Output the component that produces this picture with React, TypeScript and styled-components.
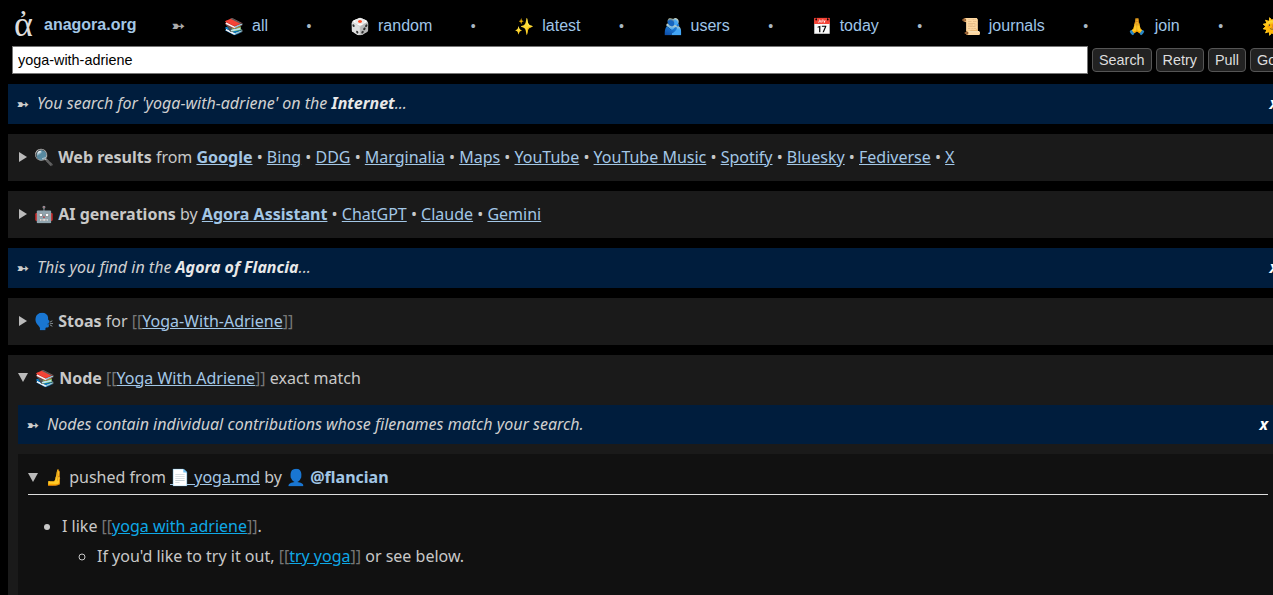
import styled, { createGlobalStyle } from "styled-components"

const GlobalStyle = createGlobalStyle`
  html, body {
    margin: 0;
    height: 595px;
    overflow: hidden;
    background: #000;
  }
  body {
    font-family: "Noto Sans", sans-serif;
    font-size: 16px;
    color: #c8c8c8;
  }
`

const Page = styled.div`
  width: 1283px;
  padding: 0 0 0 8px;
  box-sizing: border-box;
`

const Header = styled.header`
  height: 84px;
  font-family: "Liberation Sans", Arial, sans-serif;
`

const NavRow = styled.nav`
  display: flex;
  align-items: center;
  height: 46px;
  padding: 6px 0 0 6px;
  box-sizing: border-box;
  white-space: nowrap;
  color: #a9c4dc;
`

const Alpha = styled.span`
  font-family: "Liberation Serif", serif;
  font-size: 36px;
  line-height: 36px;
  width: 30px;
  margin-top: -4px;
  color: #ddd;
`

const Brand = styled.a`
  font-weight: 700;
  color: #a3c7e6;
  width: 92px;
  margin-top: -3px;
`

const NavArrow = styled.span`
  margin-left: 36px;
  width: 52px;
  font-size: 15px;
  font-weight: 700;
  color: #aaa;
`

const NavLink = styled.a`
  color: #9fc5e8;
  font-size: 16px;
  display: inline-flex;
  gap: 8px;
`

const Dot = styled.span`
  width: 82px;
  flex: none;
  text-align: center;
  color: #a9b8c4;
  font-size: 14px;
`

const NavEntry = styled.span`
  display: contents;
`

const SearchRow = styled.form`
  display: flex;
  align-items: center;
  gap: 4px;
  margin: 0;
  padding-left: 4px;
  height: 28px;
`

const SearchInput = styled.input`
  width: 1076px;
  height: 28px;
  box-sizing: border-box;
  flex: none;
  padding: 0 5px;
  border: 1px solid #767676;
  background: #fff;
  color: #000;
  font-family: "Liberation Sans", Arial, sans-serif;
  font-size: 14.4px;
`

const Button = styled.button`
  flex: none;
  height: 24px;
  padding: 0 6px;
  border: 1px solid #555;
  border-radius: 4px;
  background: #222;
  color: #ddd;
  font-family: "Liberation Sans", Arial, sans-serif;
  font-size: 14.4px;
`

const Stack = styled.main`
  display: flex;
  flex-direction: column;
  gap: 10px;
`

const Notice = styled.div<{ $compact?: boolean }>`
  display: flex;
  align-items: center;
  justify-content: space-between;
  height: ${(p) => (p.$compact ? 39 : 40)}px;
  box-sizing: border-box;
  padding: 0 5px 2px 9px;
  background: #001d3d;
  color: #d0d0d0;
  font-style: italic;
  b {
    color: #e8e8e8;
  }
`

const NoticeText = styled.span`
  display: inline-flex;
  gap: 8px;
  align-items: baseline;
`

const NoticeArrow = styled.span`
  font-style: normal;
  font-size: 14px;
  font-weight: 700;
  color: #ccc;
`

const Close = styled.span`
  font-weight: 700;
  color: #fff;
`

const Card = styled.section`
  background: #1a1a1a;
  padding: 0 10px;
  min-height: 47px;
`

const Summary = styled.div`
  display: flex;
  align-items: center;
  height: 47px;
  box-sizing: border-box;
  padding-bottom: 2px;
  white-space: nowrap;
`

const SummaryText = styled.span``

const Triangle = styled.span<{ $open?: boolean }>`
  flex: none;
  width: 0;
  height: 0;
  margin-right: 7px;
  ${(p) =>
    p.$open
      ? `border-left: 5px solid transparent; border-right: 5px solid transparent; border-top: 9px solid #bbb;`
      : `margin-left: 1px; border-top: 5px solid transparent; border-bottom: 5px solid transparent; border-left: 8px solid #bbb;`}
`

const Link = styled.a`
  color: #a3c7e6;
  text-decoration: underline;
`

const Muted = styled.span`
  color: #777;
`

const NodeBody = styled.div`
  display: flex;
  flex-direction: column;
  gap: 10px;
  padding-top: 3px;
`

const Subnode = styled.article`
  background: #111;
  height: 160px;
  padding: 0 10px;
`

const SubSummary = styled(Summary)`
  padding: 6px 0 0;
  border-bottom: 1px solid #ddd;
  width: 1240px;
  box-sizing: content-box;
  height: 34px;
`

const Handle = styled.span`
  color: #a3c7e6;
  font-weight: 700;
`

const Bullets = styled.ul`
  margin: 16px 0 0;
  padding-left: 34px;
  line-height: 30px;
  ul {
    margin: 0;
    padding-left: 35px;
  }
  a {
    color: #0fa8e6;
    text-decoration: underline;
  }
`

const navItems = [
  ["📚", "all"],
  ["🎲", "random"],
  ["✨", "latest"],
  ["🫂", "users"],
  ["📅", "today"],
  ["📜", "journals"],
  ["🙏", "join"],
]

const webLinks = ["Bing", "DDG", "Marginalia", "Maps", "YouTube", "YouTube Music", "Spotify", "Bluesky", "Fediverse", "X"]

export default function App() {
  return (
    <Page>
      <GlobalStyle />
      <Header>
        <NavRow>
          <Alpha>ἀ</Alpha>
          <Brand>anagora.org</Brand>
          <NavArrow>➳</NavArrow>
          {navItems.map(([icon, label]) => (
            <NavEntry key={label}>
              <NavLink>
                <span>{icon}</span>
                {label}
              </NavLink>
              <Dot>•</Dot>
            </NavEntry>
          ))}
          <NavLink>🌞</NavLink>
        </NavRow>
        <SearchRow>
          <SearchInput defaultValue="yoga-with-adriene" />
          <Button type="button">Search</Button>
          <Button type="button">Retry</Button>
          <Button type="button">Pull</Button>
          <Button type="button">Go</Button>
        </SearchRow>
      </Header>
      <Stack>
        <Notice>
          <NoticeText>
            <NoticeArrow>➳</NoticeArrow>
            <span>
              You search for 'yoga-with-adriene' on the <b>Internet</b>...
            </span>
          </NoticeText>
          <Close>x</Close>
        </Notice>
        <Card>
          <Summary>
            <Triangle />
            <SummaryText>
              🔍 <b>Web results</b> from{" "}
              <Link>
                <b>Google</b>
              </Link>
              {webLinks.map((l) => (
                <span key={l}>
                  {" • "}
                  <Link>{l}</Link>
                </span>
              ))}
            </SummaryText>
          </Summary>
        </Card>
        <Card>
          <Summary>
            <Triangle />
            <SummaryText>
              🤖 <b>AI generations</b> by{" "}
              <Link>
                <b>Agora Assistant</b>
              </Link>
              {" • "}
              <Link>ChatGPT</Link>
              {" • "}
              <Link>Claude</Link>
              {" • "}
              <Link>Gemini</Link>
            </SummaryText>
          </Summary>
        </Card>
        <Notice>
          <NoticeText>
            <NoticeArrow>➳</NoticeArrow>
            <span>
              This you find in the <b>Agora of Flancia</b>...
            </span>
          </NoticeText>
          <Close>x</Close>
        </Notice>
        <Card>
          <Summary>
            <Triangle />
            <SummaryText>
              🗣️ <b>Stoas</b> for <Muted>[[</Muted>
              <Link>Yoga-With-Adriene</Link>
              <Muted>]]</Muted>
            </SummaryText>
          </Summary>
        </Card>
        <Card>
          <Summary>
            <Triangle $open />
            <SummaryText>
              📚 <b>Node</b> <Muted>[[</Muted>
              <Link>Yoga With Adriene</Link>
              <Muted>]]</Muted> exact match
            </SummaryText>
          </Summary>
          <NodeBody>
            <Notice $compact>
              <NoticeText>
                <NoticeArrow>➳</NoticeArrow>
                <span>Nodes contain individual contributions whose filenames match your search.</span>
              </NoticeText>
              <Close>x</Close>
            </Notice>
            <Subnode>
              <SubSummary>
                <Triangle $open />
                <SummaryText>
                  🫸 pushed from <Link>📄 yoga.md</Link> by 👤 <Handle>@flancian</Handle>
                </SummaryText>
              </SubSummary>
              <Bullets>
                <li>
                  I like <Muted>[[</Muted>
                  <a>yoga with adriene</a>
                  <Muted>]]</Muted>.
                  <ul>
                    <li>
                      If you'd like to try it out, <Muted>[[</Muted>
                      <a>try yoga</a>
                      <Muted>]]</Muted> or see below.
                    </li>
                  </ul>
                </li>
              </Bullets>
            </Subnode>
          </NodeBody>
        </Card>
      </Stack>
    </Page>
  )
}
